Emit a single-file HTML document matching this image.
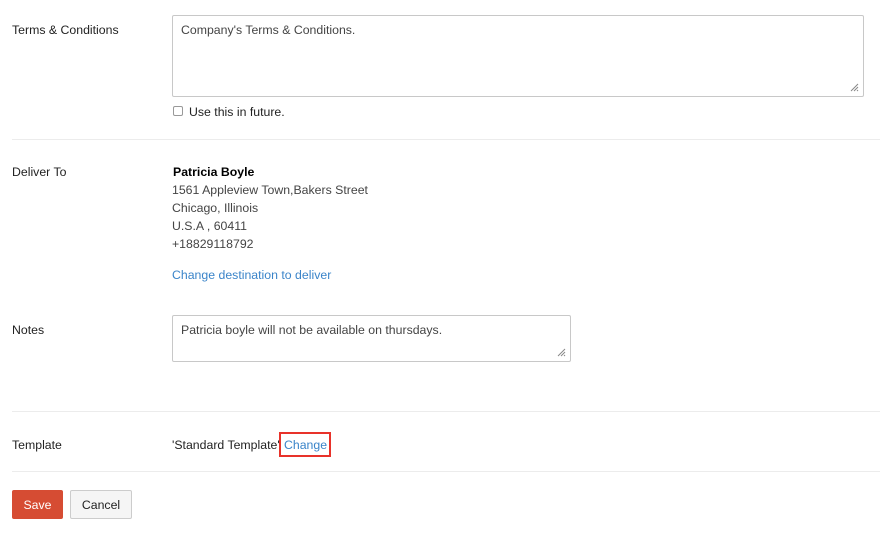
<!DOCTYPE html>
<html><head><meta charset="utf-8"><style>
body{margin:0;width:880px;height:533px;background:#fff;font-family:"Liberation Sans",sans-serif;font-size:12.3px;color:#222;position:relative;overflow:hidden}
.a{position:absolute;white-space:nowrap}
.box{position:absolute;border:1px solid #c8c8c8;border-radius:2px;box-sizing:border-box;background:#fff}
.hr{position:absolute;left:12px;right:0;height:1px;background:#ececec}
.g{color:#444}
.l{color:#3a84c9}
.grip{position:absolute;right:4px;bottom:4px;width:10px;height:10px}
</style></head><body>
<div class="a" style="left:12px;top:23px">Terms &amp; Conditions</div>
<div class="box" style="left:172px;top:15px;width:692px;height:82px"><div class="a g" style="left:8px;top:7px">Company's Terms &amp; Conditions.</div>
<svg class="grip" viewBox="0 0 10 10"><path d="M9 2L2 9M9 5L5 9M9 8L8 9" stroke="#888" stroke-width="1"/></svg></div>
<div class="box" style="left:173px;top:106px;width:10px;height:10px;border-color:#999"></div>
<div class="a" style="left:189px;top:105px">Use this in future.</div>
<div class="hr" style="top:139px"></div>
<div class="a" style="left:12px;top:165px">Deliver To</div>
<div class="a" style="left:173px;top:165px;font-weight:bold;color:#000">Patricia Boyle</div>
<div class="a g" style="left:172px;top:183px">1561 Appleview Town,Bakers Street</div>
<div class="a g" style="left:172px;top:201px">Chicago, Illinois</div>
<div class="a g" style="left:172px;top:219px">U.S.A , 60411</div>
<div class="a g" style="left:172px;top:237px">+18829118792</div>
<div class="a l" style="left:172px;top:268px">Change destination to deliver</div>
<div class="a" style="left:12px;top:323px">Notes</div>
<div class="box" style="left:172px;top:315px;width:399px;height:47px"><div class="a g" style="left:8px;top:7px">Patricia boyle will not be available on thursdays.</div>
<svg class="grip" viewBox="0 0 10 10"><path d="M9 2L2 9M9 5L5 9M9 8L8 9" stroke="#888" stroke-width="1"/></svg></div>
<div class="hr" style="top:411px"></div>
<div class="a" style="left:12px;top:438px">Template</div>
<div class="a" style="left:172px;top:438px">'Standard Template'</div>
<div class="a" style="left:279px;top:432px;width:52px;height:25px;border:2px solid #e8322a;box-sizing:border-box"></div>
<div class="a l" style="left:284px;top:438px">Change</div>
<div class="hr" style="top:471px"></div>
<div class="a" style="left:12px;top:490px;width:51px;height:29px;background:#d64c33;border-radius:2px;color:#fff;text-align:center;line-height:30px">Save</div>
<div class="a" style="left:70px;top:490px;width:62px;height:29px;background:#f5f5f5;border:1px solid #ccc;border-radius:2px;box-sizing:border-box;text-align:center;line-height:28px">Cancel</div>
</body></html>
